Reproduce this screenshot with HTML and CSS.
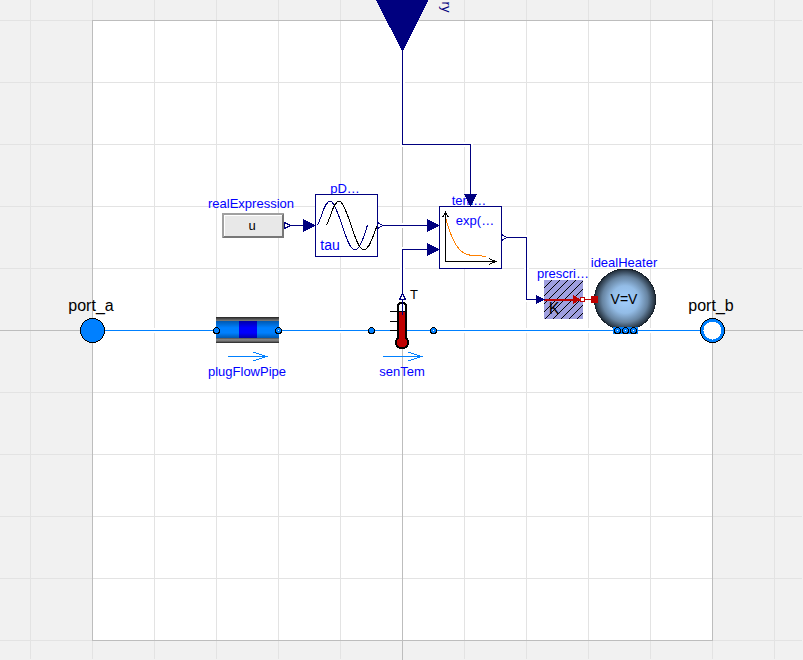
FILE: index.html
```html
<!DOCTYPE html>
<html lang="en">
<head>
<meta charset="utf-8">
<title>Model diagram</title>
<link rel="stylesheet" href="styles.css">
</head>
<body>
<main class="canvas">
<svg class="diagram" viewBox="0 0 803 660" preserveAspectRatio="xMidYMid slice" role="img" aria-label="Pipe model diagram">
  <defs>
    <pattern id="grid" x="30" y="20" width="62" height="62" patternUnits="userSpaceOnUse">
      <path class="grid-line" d="M0 .5H62M.5 0V62"/>
    </pattern>
    <pattern id="hatch" x="544" y="280" width="8" height="8" patternUnits="userSpaceOnUse">
      <path class="hatch-line" d="M-1 9L9 -1M-1 1L1 -1M7 9L9 7"/>
    </pattern>
    <linearGradient id="wall" x1="0" y1="0" x2="0" y2="1">
      <stop offset="0" stop-color="#222"/><stop offset=".08" stop-color="#555"/><stop offset=".14" stop-color="#777"/><stop offset=".2" stop-color="#111"/>
      <stop offset=".8" stop-color="#111"/><stop offset=".84" stop-color="#888"/><stop offset=".92" stop-color="#777"/><stop offset="1" stop-color="#222"/>
    </linearGradient>
    <linearGradient id="fluid" x1="0" y1="0" x2="0" y2="1">
      <stop offset="0" stop-color="#0058b0"/><stop offset=".4" stop-color="#0080ff"/><stop offset=".7" stop-color="#0080ff"/><stop offset="1" stop-color="#0058b0"/>
    </linearGradient>
    <linearGradient id="plug" x1="0" y1="0" x2="0" y2="1">
      <stop offset="0" stop-color="#0000a8"/><stop offset=".4" stop-color="#00f"/><stop offset=".7" stop-color="#00f"/><stop offset="1" stop-color="#0000a8"/>
    </linearGradient>
    <radialGradient id="sphere">
      <stop offset="0" stop-color="#a2cfff"/><stop offset=".45" stop-color="#93bce6"/><stop offset=".75" stop-color="#6683a0"/><stop offset="1" stop-color="#202c38"/>
    </radialGradient>
  </defs>

  <rect class="outside" width="803" height="660"/>
  <rect class="sheet" x="92" y="20" width="621" height="621"/>
  <rect fill="url(#grid)" width="802" height="659"/>
  <path class="axis" d="M92.500 20.500H712.500V640.500H92.500ZM402.500 20V660M0 330.500H803"/>

  <!-- Connections, each over a white halo -->
  <path class="halo" d="M402.500 51V144.500H470.500V195M291 225.500H304M383 225.500H428M402.500 294V249.500H428M507 237.500H526.500V299.500H537M104 330.500H700"/>
  <path class="signal" d="M402.500 51V144.500H470.500V195M291 225.500H304M383 225.500H428M402.500 294V249.500H428M507 237.500H526.500V299.500H537"/>
  <path class="flow" d="M104 330.500H700"/>

  <!-- Boundary input -->
  <path class="signal-fill" d="M376 0H428.500L402.500 52Z"/>
  <text class="small boundary" transform="translate(442 7) rotate(90)">ry</text>

  <!-- realExpression -->
  <rect x="222" y="213" width="62" height="25" fill="#777"/>
  <path d="M222 238V213H284L282 215H224V236Z" fill="#a0a0a0"/>
  <rect x="224" y="215" width="58" height="21" fill="#e8e8e8"/>
  <path d="M224.500 236V215.500H282" fill="none" stroke="#fff"/>
  <path class="outport" d="M284.500 222.500L290.500 225.500L284.500 228.500Z"/>
  <text class="small" x="251" y="208">realExpression</text>
  <text class="small ink" x="252" y="230">u</text>

  <!-- Time delay -->
  <text class="small" x="345" y="193">pD…</text>
  <rect class="block" x="315.500" y="194.500" width="62" height="62"/>
  <path class="signal-fill" d="M303 219V232L316 225.500Z"/>
  <path class="curve navy" d="M317.500 225.500C322 216 325 201 330 201C338 201 346 250 355 250C360 250 364 236 367.500 225"/>
  <path class="curve black" d="M326.500 225.500C331 216 334 201 339 201C347 201 355 250 364 250C369 250 373 236 377 226"/>
  <path class="outport" d="M377.500 222.500L383 225.500L377.500 228.500Z"/>
  <text class="medium" x="330" y="250">tau</text>

  <!-- Heat loss block -->
  <text class="small" x="469" y="205">tem…</text>
  <rect class="block" x="439.500" y="206.500" width="62" height="62"/>
  <path class="signal-fill" d="M464 194H477L470.500 207ZM427 219V232L440 225.500ZM427 243V256L440 249.500Z"/>
  <path class="curve black" d="M445.500 213V261.500H495M442.500 217.500L445.500 212L448.500 217.500M489 258.500L495.500 261.500L489 264.500"/>
  <path class="curve orange" d="M446 219C450 234 456 249 464 253C470 257 478 255 486 256.500"/>
  <path class="outport" d="M501.500 234.500L507 237.500L501.500 240.500Z"/>
  <text class="small" x="475" y="225">exp(…</text>

  <!-- plugFlowPipe -->
  <rect x="216" y="317" width="63" height="26" fill="url(#wall)"/>
  <rect x="216" y="321" width="63" height="17" fill="url(#fluid)"/>
  <rect x="239" y="321" width="18" height="17" fill="url(#plug)"/>
  <circle class="port" cx="216.500" cy="330.500" r="3"/>
  <circle class="port" cx="278.500" cy="330.500" r="3"/>
  <circle cx="278.500" cy="330.500" r="1" fill="#fff"/>
  <path class="flow" d="M228 356.500H266M253 352L266.500 356.500L253 361"/>
  <text class="small" x="247" y="376">plugFlowPipe</text>

  <!-- senTem -->
  <path class="scale" d="M390 311.500H398M390 321.500H398M390 330.500H398"/>
  <circle class="bulb" cx="402" cy="342.500" r="6"/>
  <path class="tube" d="M398 339V306Q398 303 402 303Q406 303 406 306V339"/>
  <rect x="399" y="311" width="6" height="30" fill="#bf0000"/>
  <path class="scale" d="M398 311.500H406"/>
  <path class="signal" d="M402.500 294V315"/>
  <path class="outport" d="M399.500 299.500L402.500 293.500L405.500 299.500Z"/>
  <circle class="port" cx="371.500" cy="330.500" r="3"/>
  <circle class="port" cx="433.500" cy="330.500" r="3"/>
  <circle cx="433.500" cy="330.500" r="1" fill="#fff"/>
  <path class="flow" d="M383 356.500H421M408 352L421.500 356.500L408 361"/>
  <text class="small ink" x="414" y="299">T</text>
  <text class="small" x="402" y="376">senTem</text>

  <!-- Prescribed temperature -->
  <rect x="544" y="280" width="39" height="39" fill="#9f9fdf"/>
  <rect x="544" y="280" width="39" height="39" fill="url(#hatch)"/>
  <text class="big" x="554" y="314">K</text>
  <path d="M544 299.500H580" fill="none" stroke="#bf0000" stroke-width="2"/>
  <path d="M573 295V304L581 299.500Z" fill="#bf0000"/>
  <path d="M583 299.500H592" stroke="#bf0000"/>
  <path class="signal-fill" d="M536 295V304L545 299.500Z"/>
  <rect x="580.500" y="297.500" width="4" height="4" fill="#fff" stroke="#bf0000"/>
  <text class="small" x="563" y="278">prescri…</text>

  <!-- idealHeater -->
  <circle cx="625" cy="299.500" r="30.500" fill="url(#sphere)" stroke="#18222c"/>
  <rect x="591" y="296" width="7" height="7" fill="#bf0000"/>
  <text class="medium ink" x="624" y="304">V=V</text>
  <rect x="613" y="327" width="25" height="7" fill="#0080ff"/>
  <g class="port">
    <circle cx="617.500" cy="330.500" r="3"/><circle cx="625.500" cy="330.500" r="3"/><circle cx="633.500" cy="330.500" r="3"/>
  </g>
  <g fill="#fff">
    <circle cx="617.500" cy="330.500" r="1"/><circle cx="625.500" cy="330.500" r="1"/><circle cx="633.500" cy="330.500" r="1"/>
  </g>
  <text class="small" x="624" y="267">idealHeater</text>

  <!-- Outer ports -->
  <circle class="port" cx="92.500" cy="330.500" r="12"/>
  <circle class="port" cx="712.500" cy="330.500" r="12"/>
  <circle cx="712.500" cy="330.500" r="9" fill="#fff"/>
  <text class="big" x="91" y="311">port_a</text>
  <text class="big" x="711" y="311">port_b</text>
</svg>
</main>
</body>
</html>
```

FILE: styles.css
```css
body {
  margin: 0;
  background: #f1f1f1;
  font-family: "Liberation Sans", Arial, sans-serif;
}

.canvas {
  height: 100vh;
  overflow: hidden;
}

.diagram {
  display: block;
  width: 100%;
  height: 100%;
  shape-rendering: crispEdges;
}

.outside { fill: #f1f1f1; }
.sheet { fill: #fff; }
.grid-line { fill: none; stroke: #e3e3e3; }
.axis { fill: none; stroke: #bdbdbd; }
.hatch-line { fill: none; stroke: #000; }

.halo { fill: none; stroke: #fff; stroke-width: 5; }
.signal { fill: none; stroke: #00007f; }
.signal-fill { fill: #00007f; }
.flow { fill: none; stroke: #0080ff; }
.block { fill: #fff; stroke: #00007f; }
.outport { fill: #fff; stroke: #00007f; }
.port { fill: #0080ff; stroke: #000; }

.curve { fill: none; }
.navy { stroke: #00007f; }
.black { stroke: #000; }
.orange { stroke: #ff8000; }

.scale { fill: none; stroke: #000; }
.tube { fill: #fff; stroke: #000; stroke-width: 2; }
.bulb { fill: #bf0000; stroke: #000; stroke-width: 2; }

text {
  fill: #00f;
  text-anchor: middle;
}
.small { font-size: 13px; }
.medium { font-size: 14px; }
.big { font-size: 16px; fill: #000; }
.ink { fill: #000; }
.boundary { fill: #00007f; }
```
